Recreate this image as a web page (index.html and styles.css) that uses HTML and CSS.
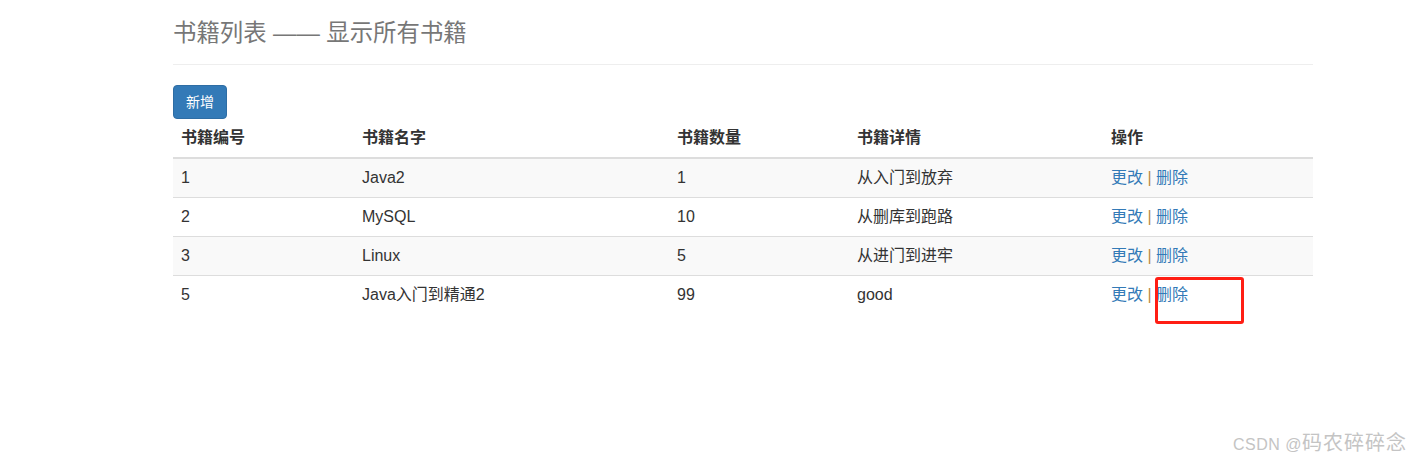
FILE: index.html
```html
<!DOCTYPE html>
<html lang="zh">
<head>
    <meta charset="UTF-8">
    <meta name="viewport" content="width=device-width, initial-scale=1.0">
    <title>书籍列表</title>
    <link rel="stylesheet" href="styles.css">
</head>
<body>
    <div class="container">
      <!-- 标题 -->
      <div class="page-header">
        <h1><small>书籍列表 —— 显示所有书籍</small></h1>
      </div>

      <a href="#" class="btn btn-primary">新增</a>

      <!-- 书籍表格 -->
      <table class="table table-striped">
        <thead>
          <tr>
            <th class="col-id">书籍编号</th>
            <th class="col-name">书籍名字</th>
            <th class="col-count">书籍数量</th>
            <th class="col-detail">书籍详情</th>
            <th class="col-op">操作</th>
          </tr>
        </thead>
        <tbody>
          <tr>
            <td>1</td>
            <td>Java2</td>
            <td>1</td>
            <td>从入门到放弃</td>
            <td><a href="#">更改</a> <span class="sep">|</span> <a href="#">删除</a></td>
          </tr>
          <tr>
            <td>2</td>
            <td>MySQL</td>
            <td>10</td>
            <td>从删库到跑路</td>
            <td><a href="#">更改</a> <span class="sep">|</span> <a href="#">删除</a></td>
          </tr>
          <tr>
            <td>3</td>
            <td>Linux</td>
            <td>5</td>
            <td>从进门到进牢</td>
            <td><a href="#">更改</a> <span class="sep">|</span> <a href="#">删除</a></td>
          </tr>
          <tr>
            <td>5</td>
            <td>Java入门到精通2</td>
            <td>99</td>
            <td>good</td>
            <td><a href="#">更改</a> <span class="sep">|</span> <a href="#">删除</a></td>
          </tr>
        </tbody>
      </table>
    </div>

    <!-- 标注框 -->
    <div class="mark-box"></div>

    <div class="watermark"><span class="wm-latin">CSDN @</span>码农碎碎念</div>
</body>
</html>
```

FILE: styles.css
```css
/* 重置样式 */
* {
  box-sizing: border-box;
}

body {
  margin: 0;
  font-family: "Liberation Sans", "Noto Sans CJK SC", sans-serif;
  font-size: 16px;
  line-height: 22px;
  color: #333;
  background-color: #fff;
  position: relative;
  min-height: 461px;
}

a {
  color: #337ab7;
  text-decoration: none;
}

.container {
  width: 1140px;
  margin-left: 173px;
}

/* 标题 */
.page-header {
  padding-top: 20px;
  padding-bottom: 18px;
  border-bottom: 1px solid #eee;
  margin-bottom: 20px;
}

.page-header h1 {
  margin: 0;
  font-size: 23.4px;
  line-height: 26px;
  font-weight: normal;
}

.page-header small {
  font-size: 23.4px;
  color: #777;
}

/* 按钮 */
.btn {
  display: inline-block;
  padding: 6px 12px;
  font-size: 14px;
  line-height: 20px;
  border: 1px solid transparent;
  border-radius: 4px;
  vertical-align: top;
}

.btn-primary {
  color: #fff;
  background-color: #337ab7;
  border-color: #2e6da4;
}

/* 表格 */
.table {
  width: 100%;
  border-collapse: collapse;
  border-spacing: 0;
  table-layout: fixed;
}

.table th,
.table td {
  padding: 8px;
  text-align: left;
  vertical-align: top;
  line-height: 22px;
}

.table th {
  font-weight: bold;
  border-bottom: 2px solid #ddd;
}

.table td {
  border-top: 1px solid #ddd;
}

.table tbody tr:first-child td {
  border-top: 0;
}

.table-striped tbody tr:nth-child(odd) {
  background-color: #f9f9f9;
}

.col-id { width: 181px; }
.col-name { width: 315px; }
.col-count { width: 180px; }
.col-detail { width: 254px; }
.col-op { width: 210px; }

.sep {
  color: #b98a40;
}

/* 红色标注框 */
.mark-box {
  position: absolute;
  left: 1155px;
  top: 277px;
  width: 89px;
  height: 47px;
  border: 3px solid #ff1e14;
  border-radius: 3px;
}

/* 水印 */
.watermark {
  position: absolute;
  right: 16px;
  top: 430px;
  font-size: 20px;
  line-height: 24px;
  color: #c4c4c4;
  font-family: "Noto Sans CJK SC", sans-serif;
  letter-spacing: 1px;
}

.wm-latin {
  font-family: "Liberation Sans", sans-serif;
  font-size: 16px;
  letter-spacing: 0.5px;
}
```
